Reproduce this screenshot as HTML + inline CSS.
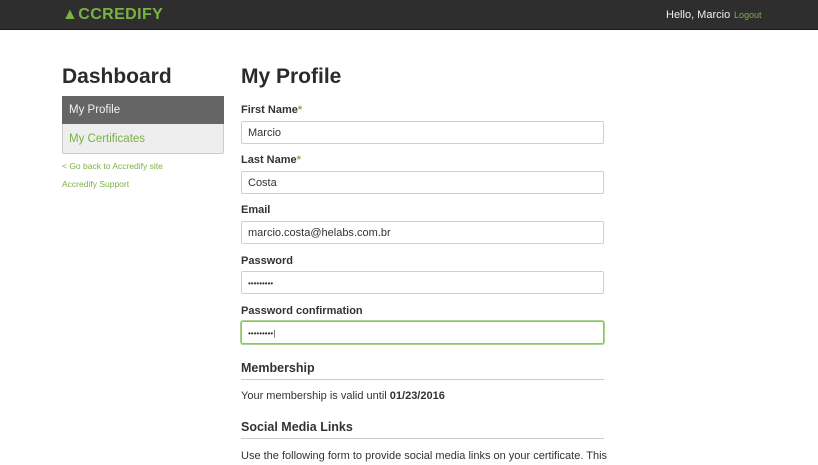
<!DOCTYPE html>
<html><head><style>
*{margin:0;padding:0;box-sizing:border-box}
body{width:818px;height:465px;overflow:hidden;background:#fff;font-family:"Liberation Sans",Arial,sans-serif;color:#333;position:relative}
.a{position:absolute}
.hdr{left:0;top:0;width:818px;height:30px;background:#2e2e2e;border-bottom:1px solid #1a1a1a}
.logo{left:62px;top:6px;font-size:16px;font-weight:bold;color:#7ab342;letter-spacing:0.4px}
.lbl{left:241px;font-size:11px;font-weight:bold;color:#333}
.req{color:#7ab342}
.in{left:241px;width:363px;height:23px;border:1px solid #d0d0d0;border-radius:2px;font-size:11px;padding:5px 6px;color:#333}
.h3{left:241px;width:363px;font-size:12.5px;font-weight:bold;border-bottom:1px solid #ccc;height:19px}
.g{color:#7ab342}
</style></head><body>
<div class="a hdr"></div>
<div class="a logo">&#9650;CCREDIFY</div>
<div class="a" style="left:666px;top:9px;font-size:11px;color:#f0f0f0">Hello, Marcio</div>
<div class="a g" style="left:734px;top:10px;font-size:9px">Logout</div>

<div class="a" style="left:62px;top:65px;font-size:21px;font-weight:bold;color:#2b2b2b">Dashboard</div>
<div class="a" style="left:62px;top:96px;width:162px;height:58px;border:1px solid #ccc;border-radius:2px;background:#eee"></div>
<div class="a" style="left:62px;top:96px;width:162px;height:28px;background:#656565"></div>
<div class="a" style="left:69px;top:104px;font-size:11.5px;color:#f2f2f2">My Profile</div>
<div class="a g" style="left:69px;top:133px;font-size:11.5px">My Certificates</div>
<div class="a g" style="left:62px;top:161px;font-size:8.5px">&lt; Go back to Accredify site</div>
<div class="a g" style="left:62px;top:179px;font-size:8.5px">Accredify Support</div>

<div class="a" style="left:241px;top:65px;font-size:21px;font-weight:bold;color:#2b2b2b">My Profile</div>
<div class="a lbl" style="top:104px">First Name<span class="req">*</span></div>
<div class="a in" style="top:121px">Marcio</div>
<div class="a lbl" style="top:154px">Last Name<span class="req">*</span></div>
<div class="a in" style="top:171px">Costa</div>
<div class="a lbl" style="top:204px">Email</div>
<div class="a in" style="top:221px">marcio.costa@helabs.com.br</div>
<div class="a lbl" style="top:255px">Password</div>
<div class="a in" style="top:271px;font-size:8px;padding-top:7px">•••••••••</div>
<div class="a lbl" style="top:305px">Password confirmation</div>
<div class="a in" style="top:321px;border-color:#8cc46a;box-shadow:0 0 0 1px #a8d58a;font-size:8px;padding-top:7px">•••••••••|</div>
<div class="a h3" style="top:361px">Membership</div>
<div class="a" style="left:241px;top:390px;font-size:11px">Your membership is valid until <b>01/23/2016</b></div>
<div class="a h3" style="top:420px">Social Media Links</div>
<div class="a" style="left:241px;top:450px;font-size:11px">Use the following form to provide social media links on your certificate. This</div>
</body></html>
